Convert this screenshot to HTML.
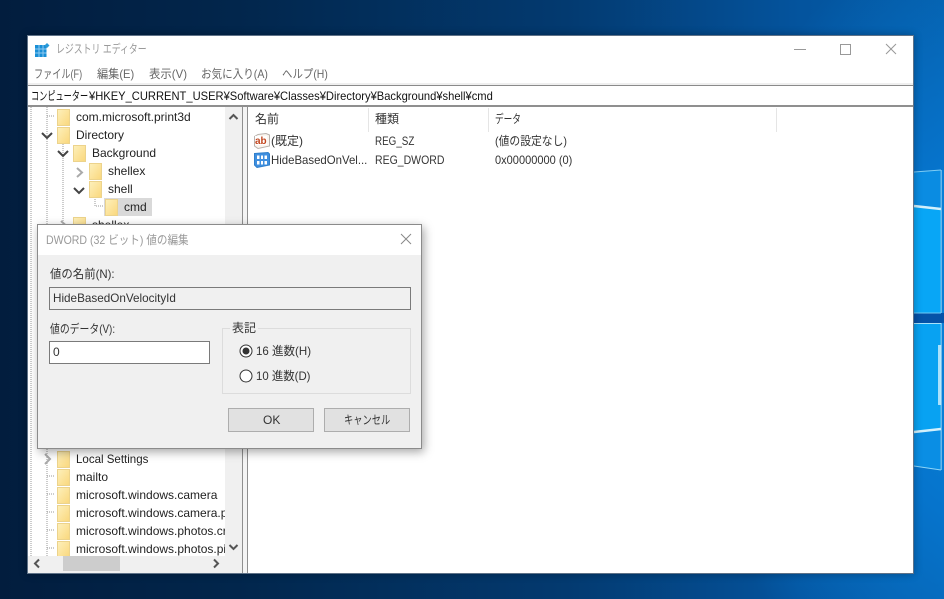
<!DOCTYPE html>
<html lang="ja"><head><meta charset="utf-8"><title>レジストリ エディター</title>
<style>
html,body{margin:0;padding:0;width:944px;height:599px;overflow:hidden}
body{position:relative;font-family:"Liberation Sans","Noto Sans CJK JP",sans-serif;font-size:12px;color:#333;
background:radial-gradient(ellipse 300px 420px at 1000px 340px,#0a86dc 0%,#0674cc 45%,rgba(5,90,170,0) 100%),linear-gradient(90deg,#021d3e 0%,#02264c 25%,#033a70 60%,#04549e 85%,#055da8 100%)}
div,span,svg{position:absolute;white-space:nowrap}
.t{line-height:18px;height:18px;transform-origin:0 0}
.win{left:27px;top:35px;width:885px;height:537px;background:#fff;border:1px solid #5f7288;box-shadow:0 0 8px rgba(0,0,0,.3)}
.m{color:#666}
</style></head><body>
<!-- desktop logo panes -->
<svg style="left:913px;top:0" width="31" height="599" viewBox="0 0 31 599">
<path d="M1 172L28 170V209L1 205Z" fill="#0a8ce2"/>
<path d="M1 205L28 209V313H1Z" fill="#08a6f6"/>
<path d="M1 313H31V323H1Z" fill="#0552a8"/>
<path d="M1 323H28V429L1 432Z" fill="#08a2f2"/>
<path d="M1 432L28 429V470L1 466Z" fill="#0a8ee4"/>
<path d="M1 172L28 170" stroke="#7fcdf5" stroke-width="1" fill="none"/>
<path d="M1 206L28 209" stroke="#d2f0fc" stroke-width="2.500" fill="none"/>
<path d="M1 323.500H28" stroke="#a8e2fa" stroke-width="1" fill="none"/>
<path d="M1 432L28 429" stroke="#d2f0fc" stroke-width="2.500" fill="none"/>
<path d="M1 466L28 470" stroke="#8ed6f8" stroke-width="1" fill="none"/>
<path d="M1 313H28" stroke="#6ec8f4" stroke-width="1" fill="none"/>
<path d="M28.500 170V313M28.500 323V470" stroke="#c8eefc" stroke-width="1.500" fill="none"/>
<path d="M27 345V405" stroke="#effcff" stroke-width="4" fill="none" opacity=".7"/>
<path d="M30 170V313M30 323V470" stroke="#0a7fd6" stroke-width="3" fill="none"/>
</svg>

<div class="win"></div>
<!-- title -->
<svg style="left:35px;top:42px" width="16" height="16" viewBox="0 0 16 16">
<rect x="0" y="3" width="11.500" height="12" fill="#1a8fd6"/>
<path d="M0 7H11.500M0 11H11.500M4 3V15M8 3V15" stroke="#8ccaf0" stroke-width="1"/>
<path d="M12 1L14.500 3.500L12 6L9.500 3.500Z" fill="#2a9ad8"/>
</svg>
<div class="t" style="left:56px;top:40px;color:#9a9a9a;transform:scaleX(.74)">レジストリ エディター</div>
<div style="left:794px;top:49px;width:12px;height:1px;background:#999"></div>
<div style="left:840px;top:44px;width:9px;height:9px;border:1px solid #999"></div>
<svg style="left:885px;top:43px" width="12" height="12" viewBox="0 0 12 12"><path d="M1 1L11 11M11 1L1 11" stroke="#999" stroke-width="1"/></svg>
<!-- menu -->
<div class="t m" style="left:34px;top:65px;transform:scaleX(.76)">ファイル(F)</div>
<div class="t m" style="left:97px;top:65px;transform:scaleX(.93)">編集(E)</div>
<div class="t m" style="left:149px;top:65px;transform:scaleX(.95)">表示(V)</div>
<div class="t m" style="left:201px;top:65px;transform:scaleX(.88)">お気に入り(A)</div>
<div class="t m" style="left:282px;top:65px;transform:scaleX(.87)">ヘルプ(H)</div>
<!-- address -->
<div style="left:28px;top:83px;width:885px;height:2px;background:#efefef"></div>
<div style="left:28px;top:85px;width:885px;height:1px;background:#8a8a8a"></div>
<div style="left:28px;top:105px;width:885px;height:2px;background:#8f8f8f"></div>
<div class="t" style="left:31px;top:87px;color:#111;transform:scaleX(.68)">コンピューター</div>
<div class="t" style="left:89px;top:87px;color:#111;transform:scaleX(.93)">¥HKEY_CURRENT_USER¥Software¥Classes¥Directory¥Background¥shell¥cmd</div>
<!-- tree area -->
<div style="left:28px;top:107px;width:214px;height:466px;background:#fff;overflow:hidden">
<svg style="left:0;top:0" width="214" height="466">
<defs><linearGradient id="g" x1="0" y1="0" x2="1" y2="1"><stop offset="0" stop-color="#fdf0bc"/><stop offset="1" stop-color="#fad77c"/></linearGradient></defs>
<g fill="none" stroke="#999" stroke-dasharray="1 1">
<path d="M3 0V466"/>
<path d="M19 0V466"/>
<path d="M35 35V120"/>
<path d="M19 9H27M19 369H27M19 387H27M19 405H27M19 423H27M19 441H27"/>
<path d="M67 90V99H75"/>
</g>
<g fill="url(#g)" stroke="#ecd38c">
<path d="M29.500 2.500H41.500V18.500H29.500Z"/><path d="M29.500 20.500H41.500V36.500H29.500Z"/>
<path d="M45.500 38.500H57.500V54.500H45.500Z"/><path d="M61.500 56.500H73.500V72.500H61.500Z"/>
<path d="M61.500 74.500H73.500V90.500H61.500Z"/>
<path d="M45.500 110.500H57.500V126.500H45.500Z"/>
<path d="M29.500 344.500H41.500V360.500H29.500Z"/><path d="M29.500 362.500H41.500V378.500H29.500Z"/>
<path d="M29.500 380.500H41.500V396.500H29.500Z"/><path d="M29.500 398.500H41.500V414.500H29.500Z"/>
<path d="M29.500 416.500H41.500V432.500H29.500Z"/><path d="M29.500 434.500H41.500V450.500H29.500Z"/>
</g>
<g fill="none" stroke="#444" stroke-width="2">
<path d="M14 26L19 31L24 26"/>
<path d="M30 44L35 49L40 44"/>
<path d="M46 81L51 86L56 81"/>
</g>
<g fill="none" stroke="#aaa" stroke-width="2">
<path d="M49 61L54 65.500L49 70"/>
<path d="M33 114L38 118.500L33 123"/>
<path d="M17 347L22 352L17 357"/>
</g>
</svg>
<div style="left:76px;top:91px;width:48px;height:18px;background:#d9d9d9"></div>
<svg style="left:77px;top:92px" width="16" height="17"><path d="M.5 .5H12.500V16.500H.5Z" fill="url(#g)" stroke="#ecd38c"/></svg>
<div class="t" style="left:48px;top:1px;color:#222">com.microsoft.print3d</div>
<div class="t" style="left:48px;top:19px;color:#222">Directory</div>
<div class="t" style="left:64px;top:37px;color:#222">Background</div>
<div class="t" style="left:80px;top:55px;color:#222">shellex</div>
<div class="t" style="left:80px;top:73px;color:#222">shell</div>
<div class="t" style="left:96px;top:91px;color:#222">cmd</div>
<div class="t" style="left:64px;top:109px;color:#222">shellex</div>
<div class="t" style="left:48px;top:343px;color:#222;transform:scaleX(.96)">Local Settings</div>
<div class="t" style="left:48px;top:361px;color:#222">mailto</div>
<div class="t" style="left:48px;top:379px;color:#222">microsoft.windows.camera</div>
<div class="t" style="left:48px;top:397px;width:149px;overflow:hidden;color:#222">microsoft.windows.camera.picker</div>
<div class="t" style="left:48px;top:415px;width:149px;overflow:hidden;color:#222">microsoft.windows.photos.crop</div>
<div class="t" style="left:48px;top:433px;width:149px;overflow:hidden;color:#222">microsoft.windows.photos.picker</div>
<!-- vertical scrollbar -->
<div style="left:197px;top:0;width:17px;height:449px;background:#f0f0f0"></div>
<svg style="left:197px;top:0" width="17" height="449"><path d="M4.500 12L8.500 8L12.500 12M4.500 438L8.500 442L12.500 438" fill="none" stroke="#555" stroke-width="2"/></svg>
<!-- horizontal scrollbar -->
<div style="left:0;top:449px;width:214px;height:17px;background:#f0f0f0"></div>
<div style="left:35px;top:449px;width:57px;height:15px;background:#cdcdcd"></div>
<svg style="left:0;top:449px" width="214" height="17"><path d="M11 3.500L7 7.500L11 11.500M186 3.500L190 7.500L186 11.500" fill="none" stroke="#555" stroke-width="2"/></svg>
</div>
<!-- splitter -->
<div style="left:242px;top:107px;width:1px;height:466px;background:#8f8f8f"></div>
<div style="left:243px;top:107px;width:4px;height:466px;background:#f4f4f4"></div>
<div style="left:247px;top:107px;width:1px;height:466px;background:#8f8f8f"></div>
<!-- list headers -->
<div style="left:368px;top:108px;width:1px;height:24px;background:#e5e5e5"></div>
<div style="left:488px;top:108px;width:1px;height:24px;background:#e5e5e5"></div>
<div style="left:776px;top:108px;width:1px;height:24px;background:#e5e5e5"></div>
<div class="t" style="left:255px;top:110px">名前</div>
<div class="t" style="left:375px;top:110px">種類</div>
<div class="t" style="left:495px;top:110px;transform:scaleX(.72)">データ</div>
<!-- icons -->
<svg style="left:254px;top:133px" width="16" height="16" viewBox="0 0 16 16"><path d="M.5 3.500L4 1.500L12 .5L15.500 2V13L4 15.500L.5 13Z" fill="#fbf6f0" stroke="#b9b2ad"/><rect x="1" y="3" width="12" height="9" fill="#fff"/><text x="1" y="11" font-family="Liberation Sans" font-size="10" font-weight="700" fill="#c2451e">ab</text></svg>
<svg style="left:254px;top:152px" width="16" height="16" viewBox="0 0 16 16"><path d="M.5 1.500L14 .5L15.500 2V13L3 15.500L.5 13Z" fill="#3f8fdf" stroke="#2f7fcc"/><path d="M3 3.500H5.500V7H3ZM7 3.500H9V7H7ZM10.500 3.500H13V7H10.500ZM3 9H5.500V12.500H3ZM7 9H9V12.500H7ZM10.500 9H13V12.500H10.500Z" fill="#fff"/></svg>
<!-- list rows -->
<div class="t" style="left:271px;top:132px">(既定)</div>
<div class="t" style="left:375px;top:132px;transform:scaleX(.82)">REG_SZ</div>
<div class="t" style="left:495px;top:132px;transform:scaleX(.9)">(値の設定なし)</div>
<div class="t" style="left:271px;top:151px;transform:scaleX(.95)">HideBasedOnVel...</div>
<div class="t" style="left:375px;top:151px;transform:scaleX(.875)">REG_DWORD</div>
<div class="t" style="left:495px;top:151px;transform:scaleX(.92)">0x00000000 (0)</div>
<!-- dialog -->
<div style="left:37px;top:224px;width:383px;height:223px;background:#f0f0f0;border:1px solid #8b8b8b;box-shadow:2px 3px 9px rgba(0,0,0,.35)"></div>
<div style="left:38px;top:225px;width:383px;height:30px;background:#fff"></div>
<div class="t" style="left:46px;top:231px;color:#999;transform:scaleX(.88)">DWORD (32 ビット) 値の編集</div>
<svg style="left:400px;top:233px" width="12" height="12" viewBox="0 0 12 12"><path d="M1 1L11 11M11 1L1 11" stroke="#888" stroke-width="1"/></svg>
<div class="t" style="left:50px;top:265px;transform:scaleX(.95)">値の名前(N):</div>
<div style="left:49px;top:287px;width:360px;height:21px;background:#f0f0f0;border:1px solid #7a7a7a"></div>
<div class="t" style="left:53px;top:289px;transform:scaleX(.975)">HideBasedOnVelocityId</div>
<div class="t" style="left:50px;top:320px;transform:scaleX(.82)">値のデータ(V):</div>
<div style="left:49px;top:341px;width:159px;height:21px;background:#fff;border:1px solid #7a7a7a"></div>
<div class="t" style="left:53px;top:343px">0</div>
<div style="left:222px;top:328px;width:187px;height:64px;border:1px solid #dcdcdc"></div>
<div class="t" style="left:230px;top:319px;background:#f0f0f0;padding:0 2px">表記</div>
<svg style="left:239px;top:344px" width="14" height="14"><circle cx="7" cy="7" r="6" fill="#fff" stroke="#333"/><circle cx="7" cy="7" r="3.500" fill="#333"/></svg>
<svg style="left:239px;top:369px" width="14" height="14"><circle cx="7" cy="7" r="6" fill="#fff" stroke="#333"/></svg>
<div class="t" style="left:256px;top:342px;transform:scaleX(.96)">16 進数(H)</div>
<div class="t" style="left:256px;top:367px;transform:scaleX(.95)">10 進数(D)</div>
<div style="left:228px;top:408px;width:84px;height:22px;background:#e1e1e1;border:1px solid #adadad"></div>
<div style="left:324px;top:408px;width:84px;height:22px;background:#e1e1e1;border:1px solid #adadad"></div>
<div class="t" style="left:263px;top:411px">OK</div>
<div class="t" style="left:344px;top:411px;transform:scaleX(.77)">キャンセル</div>
</body></html>
